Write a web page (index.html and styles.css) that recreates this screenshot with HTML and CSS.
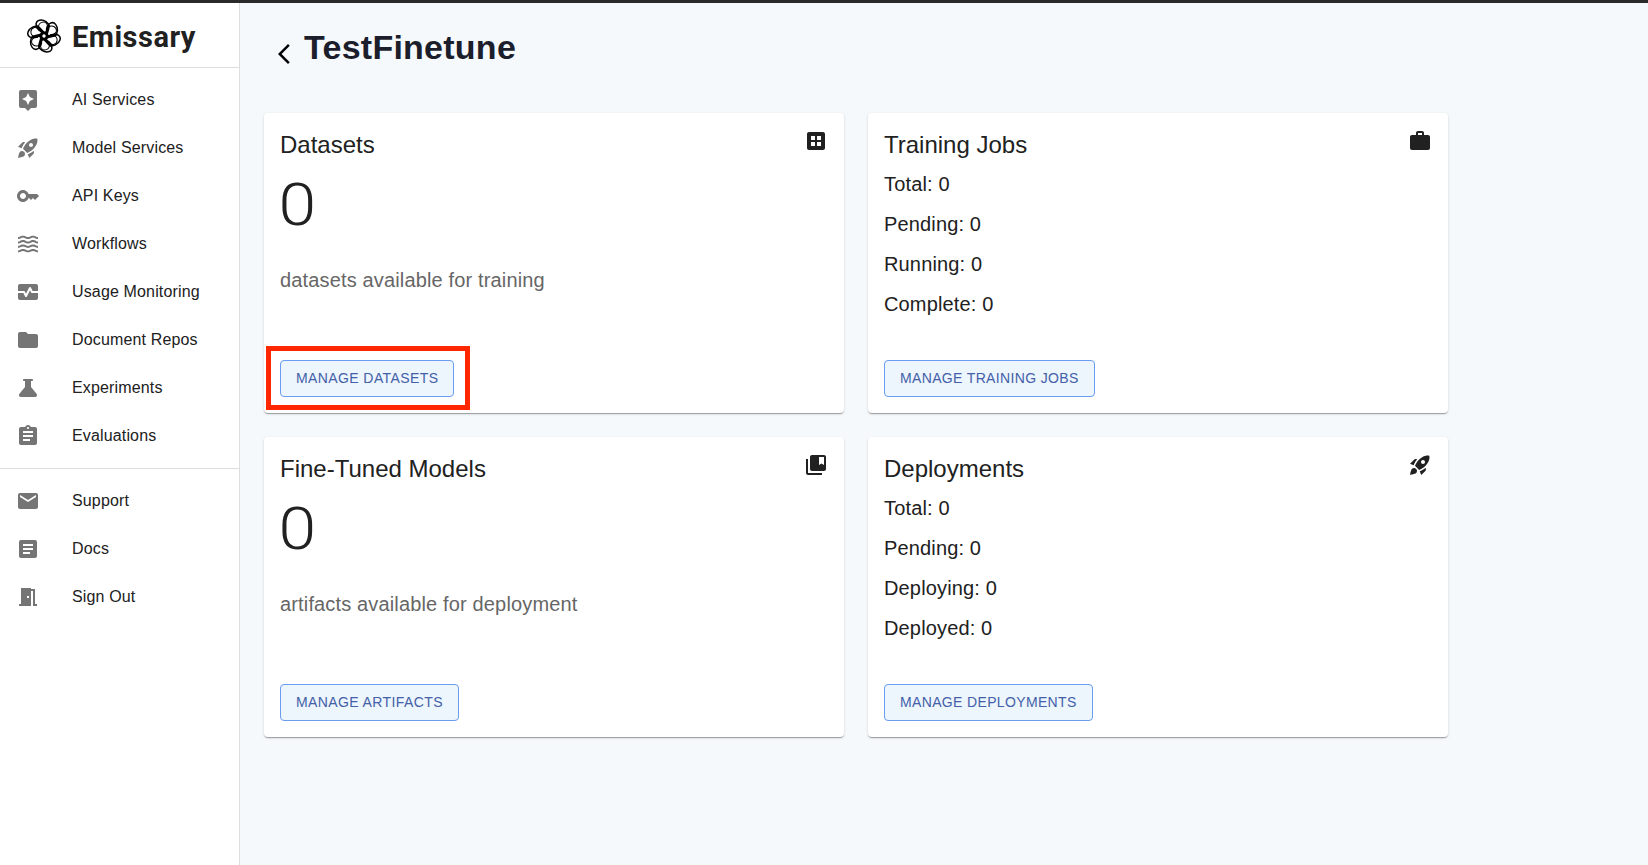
FILE: index.html
```html
<!DOCTYPE html>
<html lang="en">
<head>
<meta charset="utf-8">
<title>Emissary</title>
<link rel="stylesheet" href="styles.css">
</head>
<body>
<div class="app">
  <aside class="sidebar">
    <div class="brand">
      <svg class="logo" viewBox="-18 -18 36 36">
        <defs>
          <g id="petal">
            <path d="M-3.600-6C-8-11-6.500-16.200-2-16.300C2.500-16.400 6.500-12.500 6.800-8.500" stroke-width="1.500"/>
            <path d="M-4.500-9C-3.500-14.500 2-15.500 4.300-12C5.600-9.500 4-6 2-3" stroke-width="1"/>
            <path d="M0-3L-3.800-8.200" stroke-width="3"/>
            <path d="M-3-6L-5.200-10.500" stroke-width="1.800"/>
          </g>
        </defs>
        <g fill="none" stroke="#000" stroke-linecap="round">
          <use href="#petal" transform="rotate(-8)"/>
          <use href="#petal" transform="rotate(52)"/>
          <use href="#petal" transform="rotate(112)"/>
          <use href="#petal" transform="rotate(172)"/>
          <use href="#petal" transform="rotate(232)"/>
          <use href="#petal" transform="rotate(292)"/>
        </g>
        <circle r="4.600"/>
        <circle r="1.700" fill="#fff"/>
      </svg>
      <span class="brand-name">Emissary</span>
    </div>
    <nav class="menu">
      <a class="item"><svg class="icon" viewBox="0 0 24 24"><path d="M19 2H5c-1.1 0-2 .9-2 2v14c0 1.1.9 2 2 2h4l3 3 3-3h4c1.1 0 2-.9 2-2V4c0-1.1-.9-2-2-2zm-5.12 10.88L12 17l-1.88-4.12L6 11l4.12-1.88L12 5l1.88 4.12L18 11l-4.12 1.88z"/></svg><span>AI Services</span></a>
      <a class="item"><svg class="icon" viewBox="0 0 24 24"><path id="rocket" d="M9.19 6.35c-2.04 2.29-3.44 5.58-3.57 5.89L2 10.69l4.05-4.05c.47-.47 1.15-.68 1.81-.55l1.33.26zM11.17 17s3.74-1.55 5.89-3.7c5.4-5.4 4.5-9.62 4.21-10.57-.95-.3-5.17-1.19-10.57 4.21C8.55 9.09 7 12.83 7 12.83L11.17 17zm6.48-2.19c-2.29 2.04-5.58 3.44-5.89 3.57L13.31 22l4.05-4.05c.47-.47.68-1.15.55-1.81l-.26-1.33zM9 18c0 .83-.34 1.58-.88 2.12C6.94 21.3 2 22 2 22s.7-4.94 1.88-6.12C4.42 15.34 5.17 15 6 15c1.66 0 3 1.34 3 3zm4-9c0-1.1.9-2 2-2s2 .9 2 2-.9 2-2 2-2-.9-2-2z"/></svg><span>Model Services</span></a>
      <a class="item"><svg class="icon" viewBox="0 0 24 24"><path d="M21 10h-8.35C11.83 7.67 9.61 6 7 6c-3.31 0-6 2.69-6 6s2.69 6 6 6c2.61 0 4.83-1.67 5.65-4H13l2 2 2-2 2 2 4-4.04L21 10zM7 15c-1.65 0-3-1.35-3-3s1.35-3 3-3 3 1.35 3 3-1.35 3-3 3z"/></svg><span>API Keys</span></a>
      <a class="item"><svg class="icon" viewBox="0 0 24 24"><path d="M17 16.99c-1.35 0-2.2.42-2.95.8-.65.33-1.18.6-2.05.6-.9 0-1.4-.25-2.05-.6-.75-.38-1.57-.8-2.95-.8s-2.2.42-2.95.8c-.65.33-1.17.6-2.05.6v1.95c1.35 0 2.2-.42 2.95-.8.65-.33 1.17-.6 2.05-.6s1.4.25 2.05.6c.75.38 1.57.8 2.95.8s2.2-.42 2.95-.8c.65-.33 1.18-.6 2.05-.6.9 0 1.4.25 2.05.6.75.38 1.58.8 2.95.8v-1.95c-.9 0-1.4-.25-2.05-.6-.75-.38-1.6-.8-2.95-.8zm0-4.45c-1.35 0-2.2.43-2.95.8-.65.32-1.18.6-2.05.6-.9 0-1.4-.25-2.05-.6-.75-.38-1.57-.8-2.95-.8s-2.2.43-2.95.8c-.65.32-1.17.6-2.05.6v1.95c1.35 0 2.2-.43 2.95-.8.65-.35 1.15-.6 2.05-.6s1.4.25 2.05.6c.75.38 1.57.8 2.95.8s2.2-.43 2.95-.8c.65-.35 1.15-.6 2.05-.6s1.4.25 2.05.6c.75.38 1.58.8 2.95.8v-1.95c-.9 0-1.4-.25-2.05-.6-.75-.38-1.6-.8-2.95-.8zm2.95-8.08c-.75-.38-1.58-.8-2.95-.8s-2.2.42-2.95.8c-.65.32-1.18.6-2.05.6-.9 0-1.4-.25-2.05-.6-.75-.37-1.57-.8-2.95-.8s-2.2.42-2.95.8c-.65.33-1.17.6-2.05.6v1.93c1.35 0 2.2-.43 2.95-.8.65-.33 1.17-.6 2.05-.6s1.4.25 2.05.6c.75.38 1.57.8 2.95.8s2.2-.43 2.95-.8c.65-.32 1.18-.6 2.05-.6.9 0 1.4.25 2.05.6.75.38 1.58.8 2.95.8V5.04c-.9 0-1.4-.25-2.05-.58zM17 8.09c-1.35 0-2.2.43-2.95.8-.65.35-1.15.6-2.05.6s-1.4-.25-2.05-.6c-.75-.38-1.57-.8-2.95-.8s-2.2.43-2.95.8c-.65.35-1.15.6-2.05.6v1.95c1.35 0 2.2-.43 2.95-.8.65-.32 1.18-.6 2.05-.6s1.4.25 2.05.6c.75.38 1.57.8 2.95.8s2.2-.43 2.95-.8c.65-.32 1.18-.6 2.05-.6.9 0 1.4.25 2.05.6.75.38 1.58.8 2.95.8V9.49c-.9 0-1.4-.25-2.05-.6-.75-.38-1.6-.8-2.95-.8z"/></svg><span>Workflows</span></a>
      <a class="item"><svg class="icon" viewBox="0 0 24 24"><path d="M15.11 12.45 14 10.24l-3.11 6.21c-.16.34-.51.55-.89.55s-.73-.21-.89-.55L7.38 13H2v5c0 1.1.9 2 2 2h16c1.1 0 2-.9 2-2v-5h-6c-.38 0-.73-.21-.89-.55z"/><path d="M20 4H4c-1.1 0-2 .9-2 2v5h6c.38 0 .73.21.89.55L10 13.76l3.11-6.21c.34-.68 1.45-.68 1.79 0L16.62 11H22V6c0-1.1-.9-2-2-2z"/></svg><span>Usage Monitoring</span></a>
      <a class="item"><svg class="icon" viewBox="0 0 24 24"><path d="M10 4H4c-1.1 0-1.99.9-1.99 2L2 18c0 1.1.9 2 2 2h16c1.1 0 2-.9 2-2V8c0-1.1-.9-2-2-2h-8l-2-2z"/></svg><span>Document Repos</span></a>
      <a class="item"><svg class="icon" viewBox="0 0 24 24"><path d="M20.54 17.73 15 11V5h1c.55 0 1-.45 1-1s-.45-1-1-1H8c-.55 0-1 .45-1 1s.45 1 1 1h1v6l-5.54 6.730C2.360 19.100 3.200 21 5 21h14c1.800 0 2.640-1.900 1.540-3.270z"/></svg><span>Experiments</span></a>
      <a class="item"><svg class="icon" viewBox="0 0 24 24"><path d="M19 3h-4.180C14.400 1.840 13.300 1 12 1c-1.300 0-2.400.84-2.820 2H5c-1.100 0-2 .9-2 2v14c0 1.100.9 2 2 2h14c1.100 0 2-.9 2-2V5c0-1.100-.9-2-2-2zm-7 0c.55 0 1 .45 1 1s-.45 1-1 1-1-.45-1-1 .45-1 1-1zm2 14H7v-2h7v2zm3-4H7v-2h10v2zm0-4H7V7h10v2z"/></svg><span>Evaluations</span></a>
    </nav>
    <nav class="menu menu-secondary">
      <a class="item"><svg class="icon" viewBox="0 0 24 24"><path d="M20 4H4c-1.100 0-1.990.9-1.990 2L2 18c0 1.100.9 2 2 2h16c1.100 0 2-.9 2-2V6c0-1.100-.9-2-2-2zm0 4-8 5-8-5V6l8 5 8-5v2z"/></svg><span>Support</span></a>
      <a class="item"><svg class="icon" viewBox="0 0 24 24"><path d="M19 3H5c-1.100 0-2 .9-2 2v14c0 1.100.9 2 2 2h14c1.100 0 2-.9 2-2V5c0-1.100-.9-2-2-2zm-5 14H7v-2h7v2zm3-4H7v-2h10v2zm0-4H7V7h10v2z"/></svg><span>Docs</span></a>
      <a class="item"><svg class="icon" viewBox="0 0 24 24"><path d="M19 19V4h-4V3H5v16H3v2h12V6h2v15h4v-2h-2zm-6-6h-2v-2h2v2z"/></svg><span>Sign Out</span></a>
    </nav>
  </aside>

  <main class="content">
    <header class="page-head">
      <svg class="back" viewBox="0 0 24 24"><path d="M17.770 3.770 16 2 6 12l10 10 1.770-1.770L9.540 12z"/></svg>
      <h1 class="page-title">TestFinetune</h1>
    </header>
    <div class="cards">
      <section class="card">
        <div class="card-head"><h2 class="card-title">Datasets</h2>
          <svg class="icon dark" viewBox="0 0 24 24"><path fill-rule="evenodd" d="M19 3H5c-1.100 0-2 .9-2 2v14c0 1.100.9 2 2 2h14c1.100 0 2-.9 2-2V5c0-1.100-.9-2-2-2zM7 7h4v4H7zM13 7h4v4h-4zM7 13h4v4H7zM13 13h4v4h-4z"/></svg></div>
        <div class="count">0</div>
        <p class="caption">datasets available for training</p>
        <div class="actions"><span class="marked"><button class="btn">MANAGE DATASETS</button></span></div>
      </section>
      <section class="card">
        <div class="card-head"><h2 class="card-title">Training Jobs</h2>
          <svg class="icon dark" viewBox="0 0 24 24"><path d="M20 6h-4V4c0-1.110-.89-2-2-2h-4c-1.110 0-2 .89-2 2v2H4c-1.110 0-2 .89-2 2v11c0 1.110.89 2 2 2h16c1.110 0 2-.89 2-2V8c0-1.110-.89-2-2-2zm-6 0h-4V4h4v2z"/></svg></div>
        <div class="stats"><p>Total: 0</p><p>Pending: 0</p><p>Running: 0</p><p>Complete: 0</p></div>
        <div class="actions"><button class="btn btn-tight">MANAGE TRAINING JOBS</button></div>
      </section>
      <section class="card">
        <div class="card-head"><h2 class="card-title">Fine-Tuned Models</h2>
          <svg class="icon dark" viewBox="0 0 24 24"><path d="M4 6H2v14c0 1.100.9 2 2 2h14v-2H4V6z"/><path d="M20 2H8c-1.100 0-2 .9-2 2v12c0 1.100.9 2 2 2h12c1.100 0 2-.9 2-2V4c0-1.100-.9-2-2-2zm0 10-2.500-1.500L15 12V4h5v8z"/></svg></div>
        <div class="count">0</div>
        <p class="caption">artifacts available for deployment</p>
        <div class="actions"><button class="btn">MANAGE ARTIFACTS</button></div>
      </section>
      <section class="card">
        <div class="card-head"><h2 class="card-title">Deployments</h2>
          <svg class="icon dark" viewBox="0 0 24 24"><use href="#rocket"/></svg></div>
        <div class="stats"><p>Total: 0</p><p>Pending: 0</p><p>Deploying: 0</p><p>Deployed: 0</p></div>
        <div class="actions"><button class="btn btn-tight">MANAGE DEPLOYMENTS</button></div>
      </section>
    </div>
  </main>
</div>
</body>
</html>
```

FILE: styles.css
```css
* { box-sizing: border-box; }
body {
  margin: 0;
  background: #f5f9fc;
  color: #212121;
  font-family: "Liberation Sans", Arial, sans-serif;
}
h1, h2, p { margin: 0; font-weight: 400; }
.app {
  display: flex;
  height: 865px;
  border-top: 3px solid #2b2a2b;
  overflow: hidden;
}
.sidebar {
  width: 240px;
  flex: none;
  background: #fff;
  border-right: 1px solid #dedede;
}
.brand {
  display: flex;
  align-items: center;
  height: 65px;
  padding-left: 26px;
  border-bottom: 1px solid #dedede;
}
.logo { width: 36px; height: 36px; margin-top: 2px; }
.brand-name {
  margin: 4px 0 0 10px;
  font: 700 29px/36px Roboto, sans-serif;
  letter-spacing: 0.5px;
}
.menu { padding: 8px 0; }
.menu-secondary { border-top: 1px solid #dedede; }
.item {
  display: flex;
  align-items: center;
  gap: 32px;
  height: 48px;
  padding-left: 16px;
  font-size: 16px;
  line-height: 24px;
  letter-spacing: 0.15px;
}
.icon { display: block; flex: none; width: 24px; height: 24px; fill: #757575; }
.icon.dark { fill: #212121; }
.content { flex: 1; padding: 0 24px; }
.page-head {
  display: flex;
  height: 110px;
  padding: 23px 0 0 8px;
}
.back { width: 24px; height: 24px; margin-top: 16px; fill: #000; }
.page-title {
  margin-left: 8px;
  color: #1c1e2b;
  font-size: 34px;
  font-weight: 700;
  line-height: 42px;
  letter-spacing: 0.25px;
}
.cards {
  display: grid;
  grid-template-columns: 580px 580px;
  grid-auto-rows: 300px;
  gap: 24px;
}
.card {
  display: flex;
  flex-direction: column;
  padding: 16px;
  background: #fff;
  border-radius: 4px;
  box-shadow: 0 2px 1px -1px rgba(0,0,0,.2), 0 1px 1px rgba(0,0,0,.14), 0 1px 3px rgba(0,0,0,.12);
}
.card-head { display: flex; justify-content: space-between; height: 39px; }
.card-title { font-size: 24px; line-height: 32px; }
.count {
  align-self: flex-start;
  height: 73px;
  font: 300 60px/74px Roboto, sans-serif;
  transform: scaleX(1.13);
  transform-origin: 3px 50%;
  margin-left: -1px;
}
.caption {
  margin-top: 23px;
  color: #666;
  font-size: 20px;
  line-height: 32px;
  letter-spacing: 0.15px;
}
.stats { display: grid; gap: 8px; font-size: 20px; line-height: 32px; letter-spacing: 0.15px; }
.actions { display: flex; margin-top: auto; }
.btn {
  height: 37px;
  padding: 0 15px 2px;
  border: 1px solid #6a9cf0;
  border-radius: 4px;
  background: #edf5fd;
  color: #4360a8;
  font: 400 14px/24px "Liberation Sans", Arial, sans-serif;
  letter-spacing: 0.4px;
  white-space: nowrap;
}
.btn-tight { letter-spacing: 0.35px; }
.marked { position: relative; display: flex; }
.marked::after {
  content: "";
  position: absolute;
  inset: -14px -16px -13px -14px;
  border: 5px solid #ff2600;
}
```
